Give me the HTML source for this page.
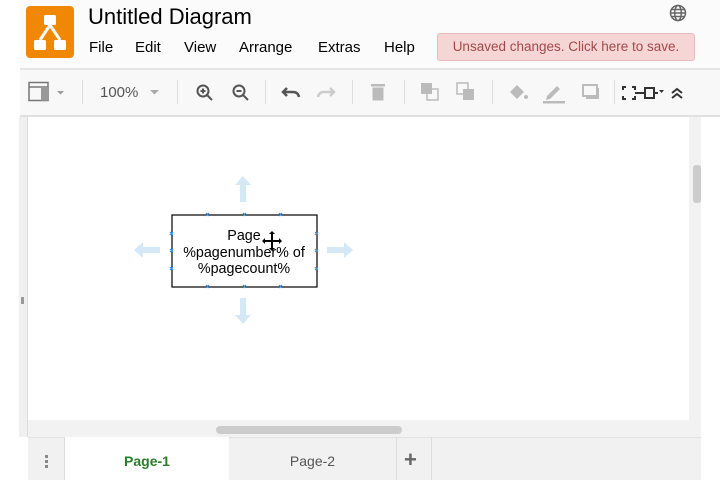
<!DOCTYPE html>
<html><head><meta charset="utf-8"><style>
*{margin:0;padding:0;box-sizing:border-box}
body{width:720px;height:480px;overflow:hidden;background:#fff;font-family:"Liberation Sans",Helvetica,Arial,sans-serif;position:relative}
.a{position:absolute}
.menu span{position:absolute;top:39px;font-size:15px;color:#000}
.sep{position:absolute;top:80px;width:1px;height:24px;background:#ddd}
</style></head><body>
<div class="a" style="left:20px;top:0;width:700px;height:68px;background:#fbfbfb"></div>
<div class="a" style="left:26px;top:6px;width:48px;height:52px;background:#f08705;border-radius:4px"></div>
<svg class="a" style="left:26px;top:6px" width="48" height="52" viewBox="0 0 48 52">
<rect x="18" y="9" width="12" height="10" rx="1.5" fill="#fff"/>
<rect x="8" y="34" width="12" height="10" rx="1.5" fill="#fff"/>
<rect x="28" y="34" width="12" height="10" rx="1.5" fill="#fff"/>
<path d="M24 19 L14 34 M24 19 L34 34" stroke="#fff" stroke-width="3" fill="none"/>
</svg>
<div class="a" style="left:88px;top:4px;font-size:22px;color:#000">Untitled Diagram</div>
<div class="menu">
<span style="left:89px">File</span><span style="left:135px">Edit</span><span style="left:184px">View</span><span style="left:239px">Arrange</span><span style="left:318px">Extras</span><span style="left:384px">Help</span>
</div>
<div class="a" style="left:437px;top:33px;width:258px;height:28px;background:#f6d5d5;border:1px solid #e8bcbc;border-radius:3px;color:#a2494a;font-size:13.5px;line-height:26px;text-align:center">Unsaved changes. Click here to save.</div>
<svg class="a" style="left:669px;top:4px" width="18" height="18" viewBox="0 0 18 18" fill="none" stroke="#666" stroke-width="1.5"><circle cx="9" cy="9" r="7.5"/><ellipse cx="9" cy="9" rx="3.3" ry="7.5"/><path d="M1.5 9h15M2.5 5.5h13M2.5 12.5h13"/></svg>
<!-- toolbar -->
<div class="a" style="left:20px;top:68px;width:700px;height:49px;background:#f8f8f8;border-top:2px solid #e6e6e6;border-bottom:2px solid #e0e0e0"></div>
<svg class="a" style="left:28px;top:81px" width="42" height="22" viewBox="0 0 42 22"><rect x="1" y="1.5" width="19" height="18" fill="none" stroke="#777" stroke-width="1.5"/><line x1="1" y1="6" x2="20" y2="6" stroke="#777" stroke-width="1.5"/><rect x="13" y="6" width="7" height="13.5" fill="#999"/><path d="M29 10h7l-3.5 3.5z" fill="#999"/></svg>
<div class="sep" style="left:82px"></div>
<div class="a" style="left:100px;top:84px;font-size:15px;color:#555">100%</div>
<svg class="a" style="left:149px;top:89px" width="12" height="8"><path d="M1 1h9l-4.5 4.5z" fill="#aaa"/></svg>
<div class="sep" style="left:177px"></div>
<svg class="a" style="left:195px;top:83px" width="20" height="20" viewBox="0 0 20 20" fill="none" stroke="#555" stroke-width="2"><circle cx="8" cy="8" r="5.5"/><path d="M12 12l5 5M5.5 8h5M8 5.5v5"/></svg>
<svg class="a" style="left:231px;top:83px" width="20" height="20" viewBox="0 0 20 20" fill="none" stroke="#555" stroke-width="2"><circle cx="8" cy="8" r="5.5"/><path d="M12 12l5 5M5.5 8h5"/></svg>
<div class="sep" style="left:265px"></div>
<svg class="a" style="left:281px;top:85px" width="20" height="14" viewBox="0 0 20 14"><path d="M6 3 L2 7 L6 11 M2 7 H12 Q17 7 18 12" fill="none" stroke="#555" stroke-width="2.5"/></svg>
<svg class="a" style="left:316px;top:85px" width="20" height="14" viewBox="0 0 20 14"><path d="M14 3 L18 7 L14 11 M18 7 H8 Q3 7 2 12" fill="none" stroke="#ccc" stroke-width="2.5"/></svg>
<div class="sep" style="left:352px"></div>
<svg class="a" style="left:370px;top:82px" width="16" height="20" viewBox="0 0 16 20"><rect x="1" y="2" width="14" height="2.5" fill="#bbb"/><rect x="2.5" y="5.5" width="11" height="13" fill="#bbb"/></svg>
<div class="sep" style="left:404px"></div>
<svg class="a" style="left:420px;top:82px" width="20" height="20" viewBox="0 0 20 20"><rect x="1" y="1" width="11" height="11" fill="#bbb"/><rect x="7" y="7" width="11" height="11" fill="none" stroke="#bbb" stroke-width="1.5"/></svg>
<svg class="a" style="left:456px;top:82px" width="20" height="20" viewBox="0 0 20 20"><rect x="1" y="1" width="11" height="11" fill="none" stroke="#bbb" stroke-width="1.5"/><rect x="7" y="7" width="11" height="11" fill="#bbb"/></svg>
<div class="sep" style="left:492px"></div>
<svg class="a" style="left:507px;top:82px" width="22" height="20" viewBox="0 0 22 20"><path d="M3 10 L10 3 L17 10 L10 17 Z" fill="#bbb"/><circle cx="19" cy="15" r="2" fill="#bbb"/></svg>
<svg class="a" style="left:542px;top:82px" width="24" height="22" viewBox="0 0 24 22"><path d="M5 14 L15 4 L18 7 L8 17 L4 18 Z" fill="#bbb"/><rect x="1" y="19" width="22" height="2.5" fill="#bbb"/></svg>
<svg class="a" style="left:581px;top:83px" width="20" height="18" viewBox="0 0 20 18"><rect x="2" y="2" width="14" height="11" fill="none" stroke="#bbb" stroke-width="2"/><path d="M17 5v10H5" fill="none" stroke="#bbb" stroke-width="2"/></svg>
<div class="sep" style="left:614px"></div>
<svg class="a" style="left:621px;top:85px" width="46" height="16" viewBox="0 0 46 16" fill="none" stroke="#333" stroke-width="2"><path d="M2 5V2h3M11 2h3v3M14 11v3h-3M5 14H2v-3"/><path d="M14 8h10"/><rect x="24" y="3" width="9" height="10"/><path d="M33 8h4"/><path d="M38 5h5l-2.5 3z" fill="#333" stroke="none"/></svg>
<svg class="a" style="left:670px;top:86px" width="14" height="14" viewBox="0 0 14 14" fill="none" stroke="#333" stroke-width="2"><path d="M2 7l5-4 5 4M2 12l5-4 5 4"/></svg>
<!-- canvas -->
<div class="a" style="left:19px;top:117px;width:9px;height:320px;background:#f0f0f0;border-right:1px solid #ddd"></div>
<div class="a" style="left:21px;top:297px;width:3px;height:7px;background:#999"></div>
<div class="a" style="left:689px;top:117px;width:12px;height:303px;background:#f2f2f2"></div>
<div class="a" style="left:693px;top:165px;width:8px;height:38px;background:#ccc;border-radius:3px"></div>
<div class="a" style="left:28px;top:420px;width:673px;height:17px;background:#f2f2f2"></div>
<div class="a" style="left:216px;top:426px;width:186px;height:8px;background:#ccc;border-radius:4px"></div>
<!-- shape -->
<svg class="a" style="left:120px;top:170px" width="250" height="160" viewBox="120 170 250 160">
<g fill="#d5e8f6">
<path d="M243 176 l-8 9 h5 v17 h6 v-17 h5 z"/>
<path d="M243 324 l-8 -9 h5 v-17 h6 v17 h5 z"/>
<path d="M134 250 l9 -8 v5 h17 v6 h-17 v5 z"/>
<path d="M353 250 l-9 -8 v5 h-17 v6 h17 v5 z"/>
</g>
<rect x="172" y="215" width="145" height="72" fill="#fff" stroke="#000" stroke-width="1.2"/>
<g stroke="#3a8ee6" stroke-width="1.2">
<path d="M206 213l3 3m0-3l-3 3M243 213l3 3m0-3l-3 3M279 213l3 3m0-3l-3 3"/>
<path d="M206 285l3 3m0-3l-3 3M243 285l3 3m0-3l-3 3M279 285l3 3m0-3l-3 3"/>
<path d="M170 232l3 3m0-3l-3 3M170 249l3 3m0-3l-3 3M170 267l3 3m0-3l-3 3"/>
<path d="M315 232l3 3m0-3l-3 3M315 249l3 3m0-3l-3 3M315 267l3 3m0-3l-3 3"/>
</g>
<text font-family="Liberation Sans" font-size="14.3" text-anchor="middle" fill="#000"><tspan x="244" y="240">Page</tspan><tspan x="244" y="257">%pagenumber% of</tspan><tspan x="244" y="273">%pagecount%</tspan></text>
<path d="M272 233v16M264 241h16" stroke="#000" stroke-width="2"/>
<path d="M272 231l-3 3h6z M272 251l-3-3h6z M262 241l3-3v6z M282 241l-3-3v6z" fill="#000"/>
</svg>
<!-- tabs -->
<div class="a" style="left:28px;top:437px;width:673px;height:43px;background:#f1f1f1;border-top:1px solid #e2e2e2"></div>
<div class="a" style="left:45px;top:455px;width:3px;height:3px;background:#888;box-shadow:0 5px #888,0 10px #888"></div>
<div class="a" style="left:64px;top:437px;width:165px;height:43px;background:#fff;border-left:1px solid #ddd;color:#2a7d2a;font-weight:bold;font-size:14px;text-align:center;line-height:48px">Page-1</div>
<div class="a" style="left:229px;top:437px;width:168px;height:43px;border-right:1px solid #ddd;color:#555;font-size:14px;text-align:center;line-height:48px">Page-2</div>
<div class="a" style="left:404px;top:450px;font-size:22px;font-weight:bold;color:#666;line-height:20px">+</div>
<div class="a" style="left:431px;top:437px;width:1px;height:43px;background:#ddd"></div>
</body></html>
